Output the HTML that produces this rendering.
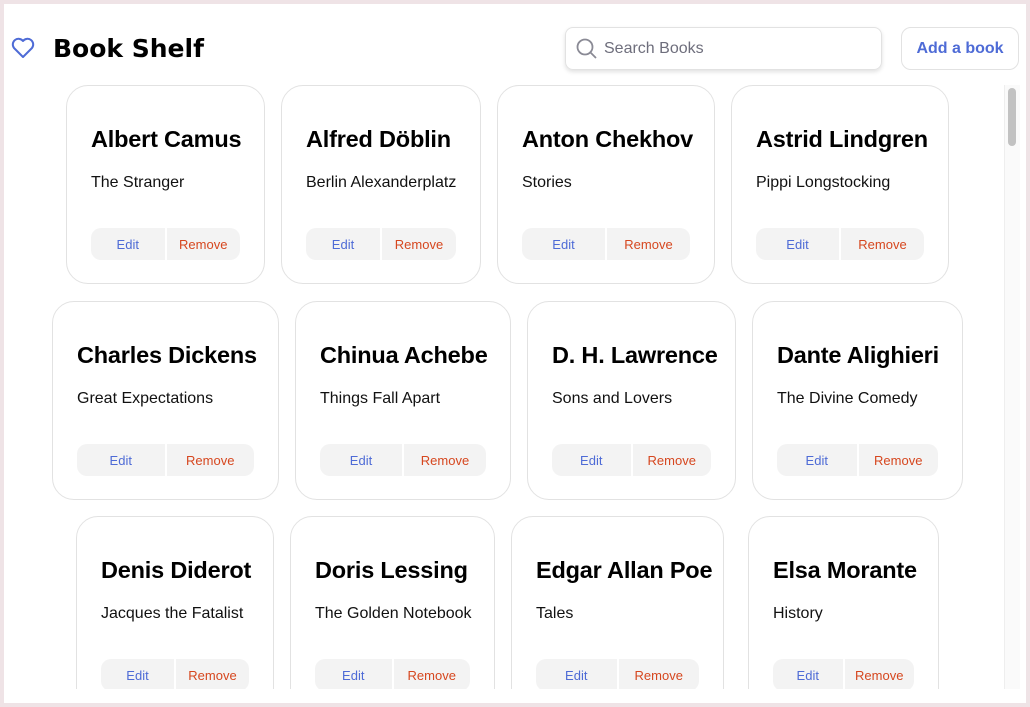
<!DOCTYPE html>
<html><head><style>
*{box-sizing:border-box;margin:0;padding:0}
body{width:1030px;height:707px;background:#efe3e6;font-family:"Liberation Sans",sans-serif;overflow:hidden;position:relative}
.frame{position:absolute;left:4px;top:4px;width:1022px;height:699px;background:#fff;overflow:hidden}
.clip{position:absolute;left:0;top:0;width:1022px;height:685px;overflow:hidden}
.abs{position:absolute}
.card{position:absolute;border:1px solid #e2e2e2;border-radius:22px;background:#fff;height:199px}
.card h2{position:absolute;left:24px;top:40px;font-size:23.5px;font-weight:bold;color:#000;white-space:nowrap;letter-spacing:-0.2px}
.card p{position:absolute;left:24px;top:88px;font-size:16px;color:#111;white-space:nowrap}
.btns{position:absolute;left:24px;right:24px;top:142px;height:32px;display:flex;gap:2px}
.btns div{flex:1;background:#f3f3f3;font-size:13px;display:flex;align-items:center;justify-content:center}
.btns .e{color:#4e6bd6;border-radius:10px 0 0 10px}
.btns .r{color:#d6471f;border-radius:0 10px 10px 0}
</style></head><body>
<div class="frame">
<div class="clip">
<svg class="abs" style="left:7px;top:33px" width="24" height="22" viewBox="0 0 24 22"><path d="M12 20 L3 11 A5 5 0 0 1 12 4 A5 5 0 0 1 21 11 Z" fill="none" stroke="#4e6bd6" stroke-width="2" stroke-linejoin="round"/></svg>
<div class="abs" style="left:49px;top:30px;font-size:25px;font-weight:bold;font-family:'Comic Sans MS','DejaVu Sans',sans-serif;letter-spacing:0px">Book Shelf</div>
<div class="abs" style="left:561px;top:23px;width:317px;height:43px;border:1px solid #e2e2e2;border-radius:8px;box-shadow:0 2px 4px rgba(0,0,0,0.12)">
<svg class="abs" style="left:10px;top:10px" width="22" height="22" viewBox="0 0 22 22"><circle cx="9" cy="9" r="7.5" fill="none" stroke="#8a8a95" stroke-width="1.8"/><path d="M14.5 14.5 L20 20" stroke="#8a8a95" stroke-width="1.8"/></svg>
<div class="abs" style="left:38px;top:12px;font-size:16px;color:#6e6e7c">Search Books</div></div>
<div class="abs" style="left:897px;top:23px;width:118px;height:43px;border:1px solid #e2e2e2;border-radius:10px;color:#4e6bd6;font-weight:bold;font-size:16px;display:flex;align-items:center;justify-content:center">Add a book</div>
<div class="abs" style="left:1000px;top:81px;width:16px;height:620px;background:#fafafa;border-left:1px solid #eee"></div>
<div class="abs" style="left:1004px;top:84px;width:8px;height:58px;background:#c2c2c2;border-radius:4px"></div>

<div class="card" style="left:62px;top:81px;width:199px"><h2>Albert Camus</h2><p>The Stranger</p><div class="btns"><div class="e">Edit</div><div class="r">Remove</div></div></div>
<div class="card" style="left:277px;top:81px;width:200px"><h2>Alfred Döblin</h2><p>Berlin Alexanderplatz</p><div class="btns"><div class="e">Edit</div><div class="r">Remove</div></div></div>
<div class="card" style="left:493px;top:81px;width:218px"><h2>Anton Chekhov</h2><p>Stories</p><div class="btns"><div class="e">Edit</div><div class="r">Remove</div></div></div>
<div class="card" style="left:727px;top:81px;width:218px"><h2>Astrid Lindgren</h2><p>Pippi Longstocking</p><div class="btns"><div class="e">Edit</div><div class="r">Remove</div></div></div>

<div class="card" style="left:48px;top:297px;width:227px"><h2>Charles Dickens</h2><p>Great Expectations</p><div class="btns"><div class="e">Edit</div><div class="r">Remove</div></div></div>
<div class="card" style="left:291px;top:297px;width:216px"><h2>Chinua Achebe</h2><p>Things Fall Apart</p><div class="btns"><div class="e">Edit</div><div class="r">Remove</div></div></div>
<div class="card" style="left:523px;top:297px;width:209px"><h2>D. H. Lawrence</h2><p>Sons and Lovers</p><div class="btns"><div class="e">Edit</div><div class="r">Remove</div></div></div>
<div class="card" style="left:748px;top:297px;width:211px"><h2>Dante Alighieri</h2><p>The Divine Comedy</p><div class="btns"><div class="e">Edit</div><div class="r">Remove</div></div></div>

<div class="card" style="left:72px;top:512px;width:198px"><h2>Denis Diderot</h2><p>Jacques the Fatalist</p><div class="btns"><div class="e">Edit</div><div class="r">Remove</div></div></div>
<div class="card" style="left:286px;top:512px;width:205px"><h2>Doris Lessing</h2><p>The Golden Notebook</p><div class="btns"><div class="e">Edit</div><div class="r">Remove</div></div></div>
<div class="card" style="left:507px;top:512px;width:213px"><h2>Edgar Allan Poe</h2><p>Tales</p><div class="btns"><div class="e">Edit</div><div class="r">Remove</div></div></div>
<div class="card" style="left:744px;top:512px;width:191px"><h2>Elsa Morante</h2><p>History</p><div class="btns"><div class="e">Edit</div><div class="r">Remove</div></div></div>
</div>
</div>
</body></html>
